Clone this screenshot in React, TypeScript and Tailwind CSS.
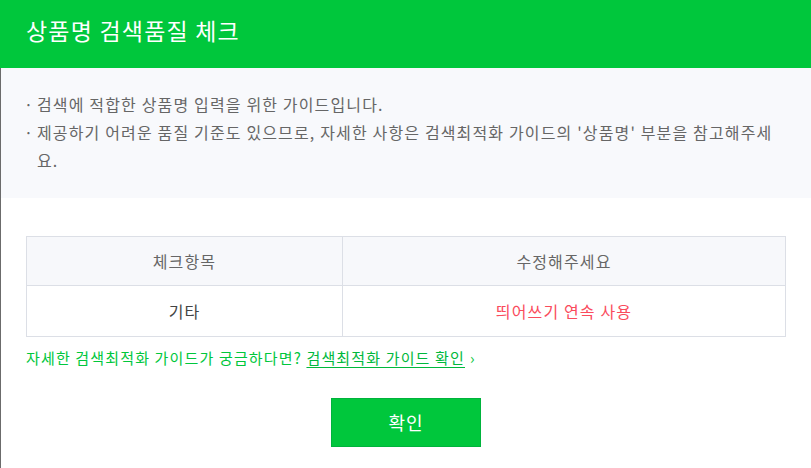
import React from "react";

export default function App() {
  const font = { fontFamily: '"Noto Sans CJK KR", "Noto Sans", sans-serif' };
  return (
    <div className="w-[811px] h-[468px] bg-white overflow-hidden flex flex-col" style={font}>
      <div className="h-[68px] bg-[#00c73c] flex items-center pl-[26px] pb-[8px] shrink-0">
        <h1 className="text-white text-[23px] leading-none font-normal tracking-[1.2px]">상품명 검색품질 체크</h1>
      </div>
      <div className="flex-1 flex flex-col border-l border-[#6b6b6b]">
        <div className="bg-[#f8f9fc] h-[130px] pl-[23px] pr-[27px] pt-[22px] text-[16px] text-[#666] leading-[28px] tracking-[1.15px] shrink-0">
          <ul className="flex flex-col">
            <li className="flex">
              <span className="w-[13px] shrink-0 tracking-normal">·</span>
              <span>검색에 적합한 상품명 입력을 위한 가이드입니다.</span>
            </li>
            <li className="flex">
              <span className="w-[13px] shrink-0 tracking-normal">·</span>
              <span>제공하기 어려운 품질 기준도 있으므로, 자세한 사항은 검색최적화 가이드의 '상품명' 부분을 참고해주세요.</span>
            </li>
          </ul>
        </div>
        <div className="pl-[25px] pt-[38px]">
          <table className="w-[760px] border-collapse text-[16px] tracking-[1.15px]">
            <tbody>
              <tr className="bg-[#f7f8fb] h-[49px]">
                <td className="border border-[#dcdfe6] w-[316px] text-center text-[#666]">체크항목</td>
                <td className="border border-[#dcdfe6] text-center text-[#666]">수정해주세요</td>
              </tr>
              <tr className="h-[51px]">
                <td className="border border-[#dcdfe6] text-center text-[#444]">기타</td>
                <td className="border border-[#dcdfe6] text-center text-[#fa4b5c]">띄어쓰기 연속 사용</td>
              </tr>
            </tbody>
          </table>
          <p className="mt-[10px] text-[15px] leading-[22px] text-[#00c73c] tracking-[1.15px] flex items-center">
            자세한 검색최적화 가이드가 궁금하다면?&nbsp;
            <a className="underline text-[#00b83c] underline-offset-[3px]">검색최적화 가이드 확인</a>
            <span className="ml-[5px]">›</span>
          </p>
          <div className="flex justify-center mt-[29px] pr-[25px]">
            <button className="w-[150px] h-[49px] bg-[#00c73c] border border-[#00b33c] text-white text-[18px] tracking-[1px]">확인</button>
          </div>
        </div>
      </div>
    </div>
  );
}
